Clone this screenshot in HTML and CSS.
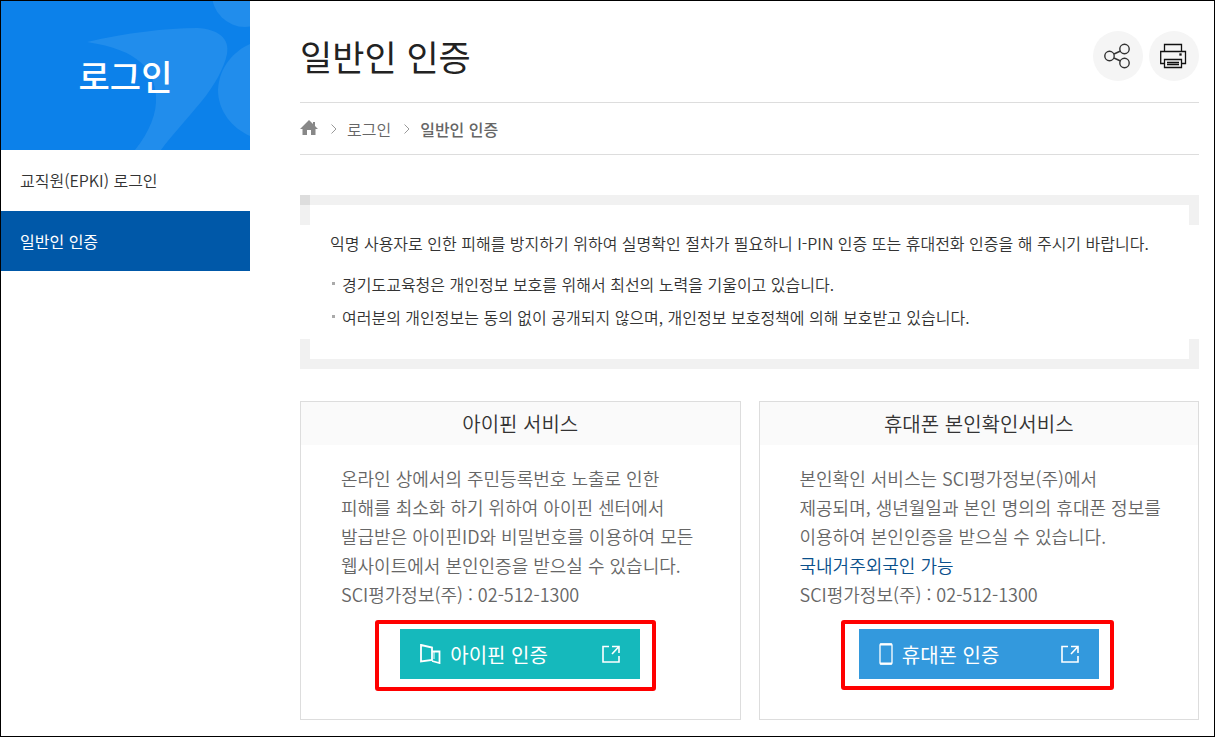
FILE: index.html
```
<!DOCTYPE html>
<html lang="ko">
<head>
    <meta charset="UTF-8">
    <meta name="viewport" content="width=device-width, initial-scale=1.0">
    <title>일반인 인증</title>
    <link rel="stylesheet" href="styles.css">
</head>
<body>
    <div class="wrap">
        <aside class="side">
            <div class="side-title">
                <svg class="side-bg" viewBox="0 0 249 149" preserveAspectRatio="xMaxYMid slice" aria-hidden="true">
                    <path d="M86 41C125 32 165 27 196 27C218 28 229 38 226 53C223 67 214 84 200 101C186 118 170 135 160 149H134C149 130 156 112 155 95C153 69 139 49 86 41Z"/>
                    <circle cx="244" cy="-7" r="33"/>
                    <path d="M249 43C233 50 218 66 217 89C217 110 231 127 249 135Z"/>
                </svg>
                <h2>로그인</h2>
            </div>
            <nav>
                <ul class="side-menu">
                    <li><a href="#">교직원(EPKI) 로그인</a></li>
                    <li><a href="#" class="on">일반인 인증</a></li>
                </ul>
            </nav>
        </aside>

        <main class="content">
            <header class="page-head">
                <h1>일반인 인증</h1>
                <div class="tools">
                    <button type="button" class="tool" aria-label="공유">
                        <svg width="28" height="28" viewBox="0 0 28 28" fill="none" stroke="#333" stroke-width="1.4">
                            <circle cx="5.500" cy="14" r="4.700"/>
                            <circle cx="20.500" cy="7" r="4.700"/>
                            <circle cx="20.500" cy="21" r="4.700"/>
                            <path d="M10 12L16.500 9M10 16L16.500 19"/>
                        </svg>
                    </button>
                    <button type="button" class="tool" aria-label="인쇄">
                        <svg width="28" height="28" viewBox="0 0 28 28" fill="none" stroke="#111" stroke-width="1.3">
                            <path d="M4.500 9.500V2.500H21.500V9.500M4.500 21.500H.700V9.500H25.500V21.500H21.500"/>
                            <path d="M4.500 17.500H21.500V25.500H4.500ZM7 20.500H19M7 22.500H19"/>
                            <rect x="20" y="12" width="1" height="1"/>
                        </svg>
                    </button>
                </div>
            </header>

            <nav class="path">
                <a href="#" class="home" aria-label="홈">
                    <svg width="18" height="16" viewBox="0 0 18 16" fill="#888">
                        <path d="M9 0L13 4V2H15V6L18 9H15.500V15H11V10H7V15H2.500V9H0Z"/>
                    </svg>
                </a>
                <svg class="arrow" width="6" height="10" viewBox="0 0 6 10" fill="none" stroke="#999"><path d="M.5.5L5 5L.5 9.500"/></svg>
                <a href="#">로그인</a>
                <svg class="arrow" width="6" height="10" viewBox="0 0 6 10" fill="none" stroke="#999"><path d="M.5.5L5 5L.5 9.500"/></svg>
                <strong>일반인 인증</strong>
            </nav>

            <section class="notice">
                <div class="notice-text">
                    <p>익명 사용자로 인한 피해를 방지하기 위하여 실명확인 절차가 필요하니 I-PIN 인증 또는 휴대전화 인증을 해 주시기 바랍니다.</p>
                    <ul>
                        <li>경기도교육청은 개인정보 보호를 위해서 최선의 노력을 기울이고 있습니다.</li>
                        <li>여러분의 개인정보는 동의 없이 공개되지 않으며, 개인정보 보호정책에 의해 보호받고 있습니다.</li>
                    </ul>
                </div>
            </section>

            <div class="cards">
                <section class="card">
                    <h3>아이핀 서비스</h3>
                    <p>온라인 상에서의 주민등록번호 노출로 인한<br>피해를 최소화 하기 위하여 아이핀 센터에서<br>발급받은 아이핀ID와 비밀번호를 이용하여 모든<br>웹사이트에서 본인인증을 받으실 수 있습니다.<br>SCI평가정보(주) : 02-512-1300</p>
                    <button type="button" class="btn btn-ipin">
                        <svg width="21" height="20" viewBox="0 0 21 20" fill="none" stroke="#fff" stroke-width="1.8">
                            <path d="M1 1L12 3.500V16L1 17.500Z"/>
                            <path d="M12 7.500H19.500V19L12 17"/>
                            <path d="M14 8V15" stroke-width="1"/>
                        </svg>
                        <span>아이핀 인증</span>
                        <svg class="open" width="18" height="18" viewBox="0 0 18 18" fill="none" stroke="#fff" stroke-width="1.6">
                            <path d="M7 1.500H1V17H17V11M10 1.500H17V8M17 1.500L10 9"/>
                        </svg>
                    </button>
                </section>
                <section class="card">
                    <h3>휴대폰 본인확인서비스</h3>
                    <p>본인확인 서비스는 SCI평가정보(주)에서<br>제공되며, 생년월일과 본인 명의의 휴대폰 정보를<br>이용하여 본인인증을 받으실 수 있습니다.<br><em>국내거주외국인 가능</em><br>SCI평가정보(주) : 02-512-1300</p>
                    <button type="button" class="btn btn-phone">
                        <svg width="14" height="22" viewBox="0 0 14 22" fill="none" stroke="#fff">
                            <rect x="1" y="1" width="12" height="20" rx="1" stroke-width="1.3"/>
                            <path d="M1 1.500H13M1 20.500H13" stroke-width="2"/>
                        </svg>
                        <span>휴대폰 인증</span>
                        <svg class="open" width="18" height="18" viewBox="0 0 18 18" fill="none" stroke="#fff" stroke-width="1.6">
                            <path d="M7 1.500H1V17H17V11M10 1.500H17V8M17 1.500L10 9"/>
                        </svg>
                    </button>
                </section>
            </div>
        </main>
    </div>
</body>
</html>
```

FILE: styles.css
```
* {
    margin: 0;
    padding: 0;
    box-sizing: border-box;
}

body {
    font-family: 'Noto Sans CJK KR', 'Noto Sans', sans-serif;
    font-weight: 350;
    color: #333;
    background: #fff;
}

a {
    color: inherit;
    text-decoration: none;
}

ul {
    list-style: none;
}

button {
    border: none;
    font: inherit;
    cursor: pointer;
}

.wrap {
    display: flex;
    gap: 50px;
    min-height: 100vh;
    padding-right: 15px;
    border: 1px solid #000;
}

/* sidebar */
.side {
    flex: 0 0 249px;
}

.side-title {
    position: relative;
    display: flex;
    align-items: center;
    justify-content: center;
    height: 149px;
    background: #0c81ea;
    color: #fff;
}

.side-bg {
    position: absolute;
    inset: 0;
    width: 100%;
    height: 100%;
    fill: #218dec;
}

.side-title h2 {
    position: relative;
    font-size: 34px;
    font-weight: 500;
}

.side-menu li {
    border-bottom: 1px solid #fff;
}

.side-menu a {
    display: block;
    padding: 0 19px;
    font-size: 16px;
    line-height: 60px;
}

.side-menu .on {
    background: #0058a8;
    color: #fff;
    font-weight: 400;
}

/* content */
.content {
    flex: 1;
    min-width: 0;
    padding-bottom: 15px;
}

.page-head {
    display: flex;
    align-items: center;
    justify-content: space-between;
    height: 102px;
    padding-top: 8px;
    border-bottom: 1px solid #ddd;
}

.page-head h1 {
    font-size: 35px;
    font-weight: 400;
    color: #222;
}

.tools {
    display: flex;
    gap: 6px;
}

.tool {
    display: flex;
    align-items: center;
    justify-content: center;
    width: 50px;
    height: 50px;
    border-radius: 50%;
    background: #f5f5f5;
}

.path {
    display: flex;
    align-items: center;
    height: 52px;
    border-bottom: 1px solid #ddd;
    font-size: 16px;
    color: #666;
}

.path .arrow {
    margin: 0 10px 0 13px;
}

.path strong {
    font-weight: 500;
}

.notice {
    position: relative;
    margin: 40px 0 32px;
    border: solid #f1f1f1;
    border-width: 10px 0;
}

.notice::before {
    content: '';
    position: absolute;
    top: -10px;
    left: 0;
    width: 10px;
    height: 10px;
    background: #ddd;
}

/* bracket ends at the four corners */
.notice-text {
    padding: 22px 10px 25px 30px;
    background:
        linear-gradient(#f1f1f1, #f1f1f1) 0 0 / 10px 20px,
        linear-gradient(#f1f1f1, #f1f1f1) 100% 0 / 10px 20px,
        linear-gradient(#f1f1f1, #f1f1f1) 0 100% / 10px 20px,
        linear-gradient(#f1f1f1, #f1f1f1) 100% 100% / 10px 20px;
    background-repeat: no-repeat;
    font-size: 16px;
    line-height: 33px;
}

.notice-text ul {
    margin-top: 8px;
}

.notice-text li {
    position: relative;
    padding-left: 12px;
}

.notice-text li::before {
    content: '';
    position: absolute;
    top: 14px;
    left: 2px;
    width: 3px;
    height: 3px;
    background: #aaa;
}

.cards {
    display: grid;
    grid-template-columns: 1fr 1fr;
    gap: 18px;
}

.card {
    padding-bottom: 40px;
    border: 1px solid #ddd;
}

.card h3 {
    background: #fafafa;
    font-size: 20px;
    font-weight: 350;
    line-height: 43px;
    text-align: center;
}

.card p {
    padding: 19px 0 20px 40px;
    font-size: 18px;
    line-height: 29px;
    color: #666;
}

.card em {
    font-style: normal;
    color: #0a508c;
}

.btn {
    position: relative;
    display: flex;
    align-items: center;
    width: 240px;
    height: 50px;
    margin: 0 auto;
    padding: 0 20px;
    color: #fff;
    font-size: 20px;
    font-weight: 400;
}

.btn span {
    flex: 1;
    margin-left: 9px;
    text-align: left;
}

.btn-ipin {
    background: #15b9bc;
}

.btn-phone {
    background: #3399dd;
}

/* red highlight round the buttons */
.btn::after {
    content: '';
    position: absolute;
    inset: -9px -16px -12px -25px;
    border: 4px solid #f00;
    border-radius: 3px;
}

.btn-phone::after {
    inset: -9px -15px -11px -18px;
}
```
